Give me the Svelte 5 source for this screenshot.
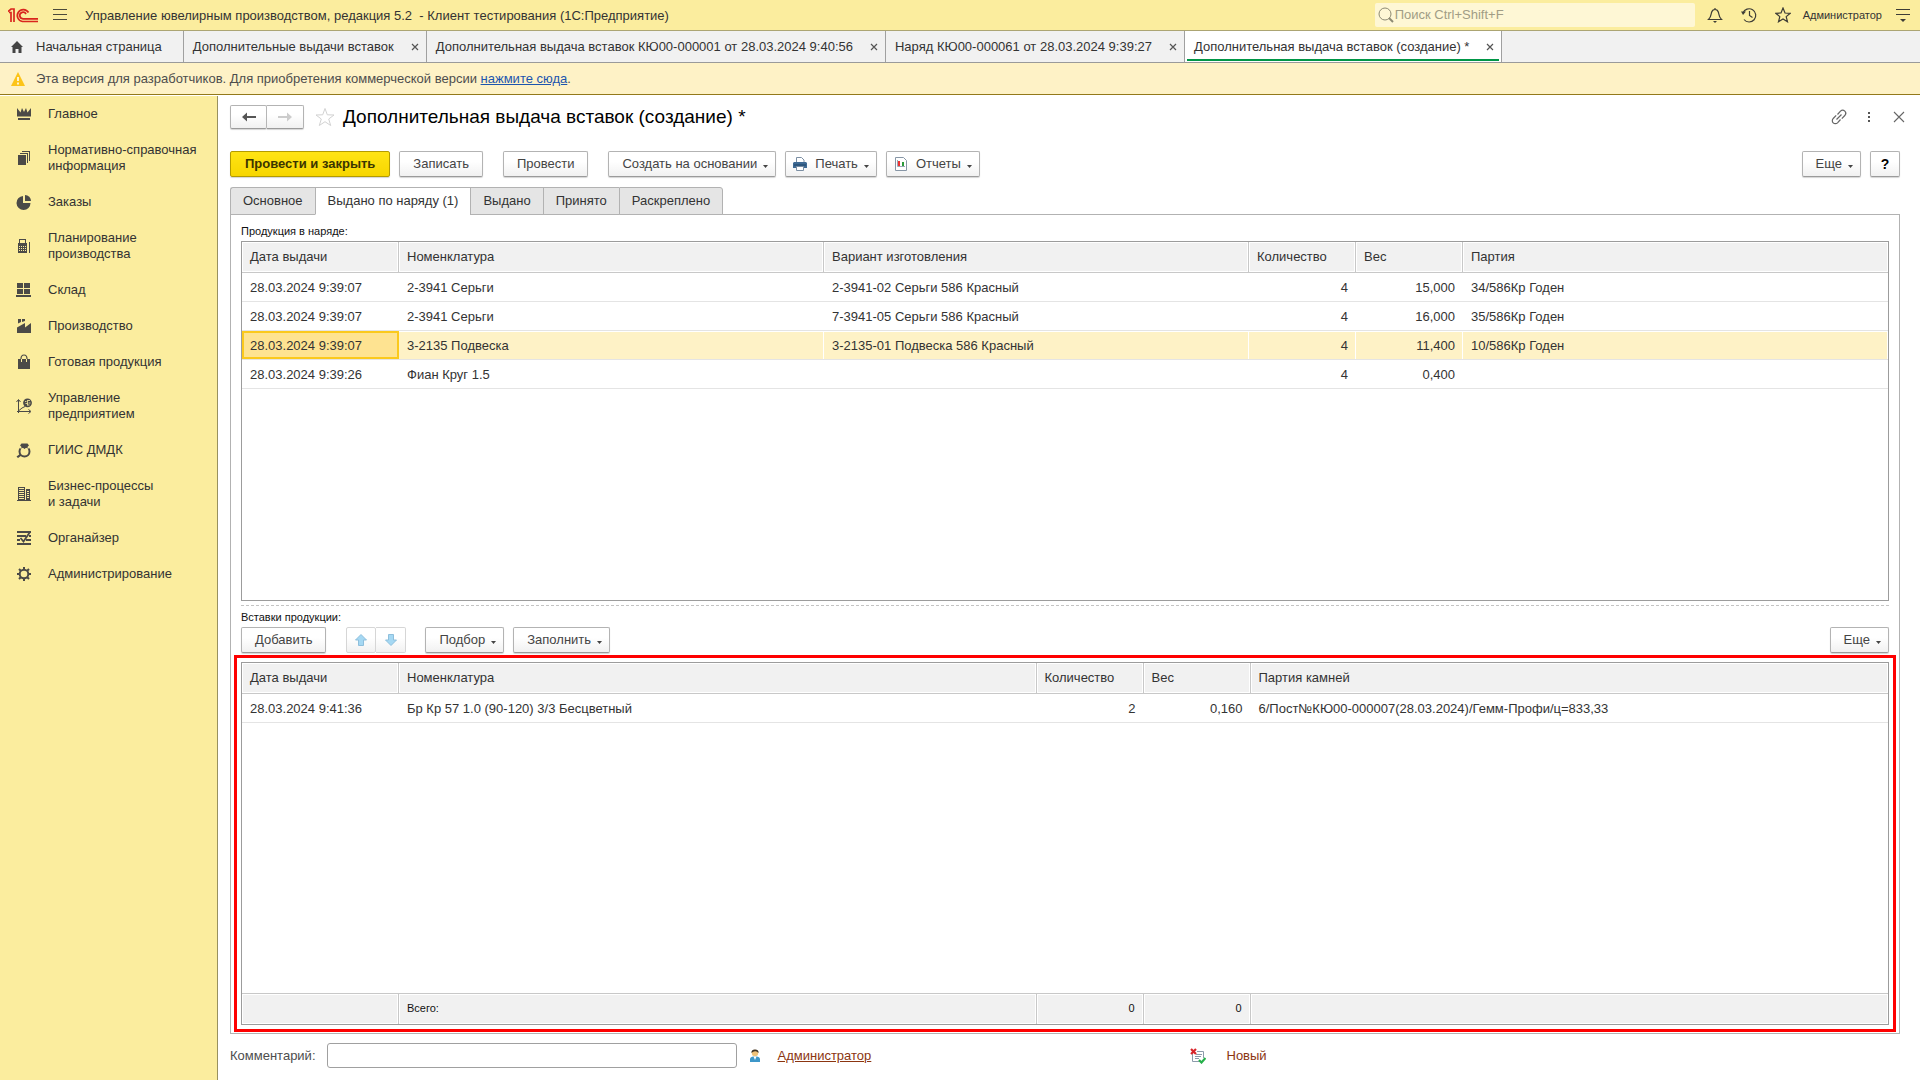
<script>
  const windows = [
    { title: 'Дополнительные выдачи вставок' },
    { title: 'Дополнительная выдача вставок КЮ00-000001 от 28.03.2024 9:40:56' },
    { title: 'Наряд КЮ00-000061 от 28.03.2024 9:39:27' },
    { title: 'Дополнительная выдача вставок (создание) *', active: true }
  ];
  const sections = [
    { icon: 'crown', lines: ['Главное'] },
    { icon: 'docs', lines: ['Нормативно-справочная', 'информация'] },
    { icon: 'pie', lines: ['Заказы'] },
    { icon: 'calc', lines: ['Планирование', 'производства'] },
    { icon: 'store', lines: ['Склад'] },
    { icon: 'factory', lines: ['Производство'] },
    { icon: 'bag', lines: ['Готовая продукция'] },
    { icon: 'chart', lines: ['Управление', 'предприятием'] },
    { icon: 'ring', lines: ['ГИИС ДМДК'] },
    { icon: 'building', lines: ['Бизнес-процессы', 'и задачи'] },
    { icon: 'organizer', lines: ['Органайзер'] },
    { icon: 'gear', lines: ['Администрирование'] }
  ];
  const pages = ['Основное', 'Выдано по наряду (1)', 'Выдано', 'Принято', 'Раскреплено'];
  const activePage = 1;
  const products = [
    ['28.03.2024 9:39:07', '2-3941 Серьги', '2-3941-02 Серьги 586 Красный', '4', '15,000', '34/586Кр Годен'],
    ['28.03.2024 9:39:07', '2-3941 Серьги', '7-3941-05 Серьги 586 Красный', '4', '16,000', '35/586Кр Годен'],
    ['28.03.2024 9:39:07', '3-2135 Подвеска', '3-2135-01 Подвеска 586 Красный', '4', '11,400', '10/586Кр Годен'],
    ['28.03.2024 9:39:26', 'Фиан Круг 1.5', '', '4', '0,400', '']
  ];
  let selected = $state(2);
  let comment = $state('');
</script>

{#snippet icon(name)}
  <svg class="section-icon" viewBox="0 0 16 16" width="16" height="16" fill="#4b4a47" aria-hidden="true">
    {#if name === 'crown'}
      <path d="M1 2l3.500 4.500L6 2 8 6 10 2l1.500 4.500L15 2v8.500H1zM2 12h12v2H2z" />
    {:else if name === 'docs'}
      <path d="M2 5h8v10H2zM4 3h8v10h-1V4H4zM6 1h8v10h-1V2H6z" />
    {:else if name === 'pie'}
      <path d="M7 2v7h7.500A7 7 0 1 1 7 2z" /><path d="M9 1a6 6 0 0 1 6 6H9z" />
    {:else if name === 'calc'}
      <path fill-rule="evenodd" d="M3 1h7v4h1v10H2V5h1zm1 1v3h5V2zM3 8v1h1V8zm2 0v1h1V8zm2 0v1h1V8zm2 0v1h1V8zM3 10v1h1v-1zm2 0v1h1v-1zm2 0v1h1v-1zm2 0v1h1v-1zM3 12v1h1v-1zm2 0v1h1v-1zm2 0v1h1v-1zm2 0v1h1v-1zM13 4h1v11h-1z" />
    {:else if name === 'store'}
      <path d="M1 1h6v5H1zM8 1h6v5H8zM1 7h6v5H1zM8 7h6v5H8zM0 13h15v2H0z" />
    {:else if name === 'factory'}
      <path d="M1 15V9.500L9 5v4.500L15 5v10zM2 1h3v3L2 5.500zM6 1h3v2L6 4z" />
    {:else if name === 'bag'}
      <path d="M2 5h12v10H2z" /><path d="M5.500 5v3M10.500 5v3" stroke="#fbed9e" /><path d="M5 5Q5 1 8 1t3 4" fill="none" stroke="#4b4a47" stroke-width="1.200" />
    {:else if name === 'chart'}
      <path d="M2.500 15V2M.5 4l2-2.500 2 2.500M1 13.500h13M12.500 11.500l2.500 2-2.500 2M3 12.500l3-2.500 3-1.500" fill="none" stroke="#4b4a47" /><circle cx="11.500" cy="4.800" r="4.400" /><path d="M9 3.500h1.500M12 2.500h2M9.500 5.500h2M12.500 5h2M11.500 7h2M11.500 2v5.500" stroke="#fbed9e" stroke-width=".8" />
    {:else if name === 'ring'}
      <circle cx="8.500" cy="9.500" r="5" fill="none" stroke="#4b4a47" stroke-width="2" /><path d="M5.500 1.500h6L13 3.500 8.500 7 4 3.500zM4 12l1.500 1.500L2 16 .5 14.500z" /><path d="M4 5l1.500 1.500M13 5l-1.500 1.500" stroke="#fbed9e" stroke-width="1.200" />
    {:else if name === 'building'}
      <path fill-rule="evenodd" d="M2 1h7v13H2zm1 1v1h5V2zm0 2v1h5V4zm0 2v1h5V6zm0 2v1h5V8zm0 2v1h5v-1zm0 2v1h5v-1zM10 3h4v11h-4zm1 2v1h2V5zm0 2v1h2V7zm0 2v1h2V9zm0 2v1h2v-1zM1 14h14v1H1z" />
    {:else if name === 'organizer'}
      <path d="M1 1h14v2H1zM1 5h9v2H1zM13 5h2v2h-2zM1 9h3v2H1zM10 9h5v2h-5zM1 13h14v2H1z" /><path d="M4.500 8l3 3.500L14 2" fill="none" stroke="#4b4a47" stroke-width="1.800" />
    {:else}
      <circle cx="8" cy="8" r="4.300" fill="none" stroke="#4b4a47" stroke-width="2" />
      <path d="M8 1v3M8 12v3M1 8h3M12 8h3M3 3l2 2M11 11l2 2M3 13l2-2M11 5l2-2" stroke="#4b4a47" stroke-width="2" />
    {/if}
  </svg>
{/snippet}

{#snippet caret()}
  <svg class="caret" viewBox="0 0 5 3" width="5" height="3" aria-hidden="true"><path d="M0 0h5L2.500 3z" fill="#444" /></svg>
{/snippet}

<div class="app">
  <header class="titlebar">
    <svg class="logo" viewBox="0 0 30 16" width="30" height="16" fill="none" stroke="#d9251d" aria-label="1C">
      <path d="M0 4.500L3 2h3v13M3 15V5.500H1" stroke-width="1.700" />
      <path d="M20.500 5.500A6 6 0 1 0 14.500 14.500H30" stroke-width="1.700" />
      <path d="M18 7A3.300 3.300 0 1 0 15 11.800H30" stroke-width="1.700" />
    </svg>
    <button class="plain menu" aria-label="Меню">
      <svg viewBox="0 0 14 12" width="14" height="12" stroke="#4b4a3a"><path d="M0 .5h14M0 5.500h14M0 10.500h14" /></svg>
    </button>
    <span class="app-title">Управление ювелирным производством, редакция 5.2 &nbsp;- Клиент тестирования (1С:Предприятие)</span>
    <label class="search">
      <svg viewBox="0 0 16 16" width="16" height="16" fill="none" stroke="#8d8a73"><circle cx="7" cy="7" r="6" /><path d="M11 11l4 4" stroke-width="2" /></svg>
      <input type="search" placeholder="Поиск Ctrl+Shift+F" aria-label="Поиск" />
    </label>
    <div class="tools">
      <button class="plain" aria-label="Уведомления">
        <svg viewBox="0 0 16 16" width="16" height="16" fill="none" stroke="#3d3c36" stroke-width="1.200"><path d="M1.500 12.500C4 10.500 4 8 4.500 5.500 5 3.500 6.500 2.500 8 2.500s3 1 3.500 3c.5 2.500.5 5 3 7zM8 1v1.500" /><path d="M6 14h4l-2 2z" fill="#3d3c36" stroke="none" /></svg>
      </button>
      <button class="plain" aria-label="История">
        <svg viewBox="0 0 16 16" width="16" height="16" fill="none" stroke="#3d3c36" stroke-width="1.200"><path d="M2 6A6.600 6.600 0 1 1 3 12.500M8.500 4v4.500l3 2" /><path d="M0 4.500h5L2 8z" fill="#3d3c36" stroke="none" /></svg>
      </button>
      <button class="plain" aria-label="Избранное">
        <svg viewBox="0 0 16 16" width="16" height="16" fill="none" stroke="#3d3c36" stroke-width="1.200"><path d="M8 1l2 5 5.200.3-4 3.300 1.300 5.200L8 12l-4.500 2.800 1.300-5.200-4-3.300L6 6z" /></svg>
      </button>
    </div>
    <a class="user" href="#user">Администратор</a>
    <button class="plain" aria-label="Настройки панели">
      <svg viewBox="0 0 14 14" width="14" height="14"><path d="M0 1.500h14M0 6.500h14" stroke="#3d3c36" /><path d="M4 11h6l-3 3z" fill="#3d3c36" /></svg>
    </button>
  </header>

  <nav class="windows" aria-label="Открытые окна">
    <a class="window home" href="#home">
      <svg viewBox="0 0 12 12" width="12" height="12"><path d="M6 0l6 6h-1.500v6H7.500V8h-3v4h-3V6H0z" fill="#444" /></svg>
      Начальная страница
    </a>
    {#each windows as w}
      <div class={['window', w.active && 'active']}>
        <a href="#window">{w.title}</a>
        <button class="plain" aria-label="Закрыть">
          <svg viewBox="0 0 8 8" width="8" height="8"><path d="M1 1l6 6M7 1L1 7" stroke="#555" stroke-width="1.200" /></svg>
        </button>
      </div>
    {/each}
  </nav>

  <div class="notice">
    <svg viewBox="0 0 14 14" width="14" height="14"><path d="M7 0l7 14H0z" fill="#fcc419" /><path d="M7 5v4M7 10.500v2" stroke="#fff" stroke-width="1.600" /></svg>
    <span>Эта версия для разработчиков. Для приобретения коммерческой версии <a href="#buy">нажмите сюда</a>.</span>
  </div>

  <div class="workspace">
    <nav class="sections" aria-label="Разделы">
      {#each sections as s}
        <a href="#section">
          {@render icon(s.icon)}
          <span>{#each s.lines as line, i}{#if i}<br />{/if}{line}{/each}</span>
        </a>
      {/each}
    </nav>

    <main>
      <div class="heading">
        <div class="pair">
          <button class="btn" aria-label="Назад"><svg viewBox="0 0 14 10" width="14" height="10"><path d="M0 5l5-4.500V4h9v2H5v3.500z" fill="#555" /></svg></button>
          <button class="btn" aria-label="Вперед"><svg viewBox="0 0 14 10" width="14" height="10"><path d="M14 5L9 .5V4H0v2h9v3.500z" fill="#ccc" /></svg></button>
        </div>
        <button class="plain star" aria-label="В избранное">
          <svg viewBox="0 0 20 20" width="20" height="20" fill="none" stroke="#d2d2d2"><path d="M10 1.500l2.300 6.300 6.700.2-5.300 4 2 6.500L10 14.700l-5.700 3.800 2-6.500L1 8l6.700-.2z" /></svg>
        </button>
        <h1>Дополнительная выдача вставок (создание) *</h1>
        <div class="form-tools">
          <button class="plain" aria-label="Ссылка">
            <svg viewBox="0 0 16 16" width="16" height="16" fill="none" stroke="#666" stroke-width="1.200"><path d="M6.500 5.500l3-3.300a3 3 0 0 1 4.300 4.300l-3 3.200M9.500 10.500l-3 3.300a3 3 0 0 1-4.300-4.300l3-3.200M5.500 10.500l5-5" /></svg>
          </button>
          <button class="plain" aria-label="Дополнительно">
            <svg viewBox="0 0 16 16" width="16" height="16" fill="#555"><path d="M7 3h2v2H7zM7 7h2v2H7zM7 11h2v2H7z" /></svg>
          </button>
          <button class="plain" aria-label="Закрыть форму">
            <svg viewBox="0 0 16 16" width="16" height="16"><path d="M3 3l10 10M13 3L3 13" stroke="#666" stroke-width="1.100" /></svg>
          </button>
        </div>
      </div>

      <div class="toolbar">
        <button class="btn primary">Провести и закрыть</button>
        <button class="btn">Записать</button>
        <button class="btn apart">Провести</button>
        <button class="btn apart">Создать на основании {@render caret()}</button>
        <button class="btn pictured">
          <svg viewBox="0 0 14 14" width="14" height="14"><path d="M3.500 5V.5h5L11 3v2" fill="#fff" stroke="#7b8ea3" /><path d="M1 5h12l1 1v5H0V6z" fill="#3f6a94" /><path d="M1 8h12" stroke="#1f4468" /><path d="M3.500 9.500h7v4h-7z" fill="#fff" stroke="#7b8ea3" /></svg>
          Печать {@render caret()}
        </button>
        <button class="btn pictured">
          <svg viewBox="0 0 14 14" width="14" height="14"><path d="M1.500.5h8l3 3v10h-11z" fill="#fff" stroke="#8796a6" /><path d="M4 4h2v5H4z" fill="#e33" /><path d="M8 5h2v4H8z" fill="#2b9a3a" /><path d="M3.500 3v6.500H11" fill="none" stroke="#9aa7b5" /></svg>
          Отчеты {@render caret()}
        </button>
        <button class="btn push">Еще {@render caret()}</button>
        <button class="btn help" aria-label="Справка">?</button>
      </div>

      <div class="pages" role="tablist">
        {#each pages as page, i}
          <button role="tab" aria-selected={i === activePage}>{page}</button>
        {/each}
      </div>

      <section class="page" role="tabpanel">
        <h2>Продукция в наряде:</h2>
        <div class="grid products">
          <table>
            <colgroup><col class="date" /><col /><col /><col class="num" /><col class="num" /><col /></colgroup>
            <thead>
              <tr><th>Дата выдачи</th><th>Номенклатура</th><th>Вариант изготовления</th><th>Количество</th><th>Вес</th><th>Партия</th></tr>
            </thead>
            <tbody>
              {#each products as row, r}
                <tr class={{ selected: r === selected }} onclick={() => (selected = r)}>
                  {#each row as cell, c}<td class={{ right: c === 3 || c === 4 }}>{cell}</td>{/each}
                </tr>
              {/each}
              <tr class="filler"><td colspan="6"></td></tr>
            </tbody>
          </table>
        </div>

        <div class="splitter"></div>

        <h2>Вставки продукции:</h2>
        <div class="toolbar inner">
          <button class="btn">Добавить</button>
          <div class="pair arrows">
            <button class="btn" aria-label="Вверх"><svg viewBox="0 0 12 12" width="12" height="12"><path d="M6 .5L11.500 6H8.500v5.500h-5V6H.5z" fill="#a5d8f3" stroke="#8ebfdc" /></svg></button>
            <button class="btn" aria-label="Вниз"><svg viewBox="0 0 12 12" width="12" height="12"><path d="M6 11.500L.5 6h3V.5h5V6h3z" fill="#a5d8f3" stroke="#8ebfdc" /></svg></button>
          </div>
          <button class="btn">Подбор {@render caret()}</button>
          <button class="btn">Заполнить {@render caret()}</button>
          <button class="btn push">Еще {@render caret()}</button>
        </div>

        <div class="frame">
          <div class="grid">
            <table>
              <colgroup><col class="date" /><col /><col class="num" /><col class="num" /><col /></colgroup>
              <thead>
                <tr><th>Дата выдачи</th><th>Номенклатура</th><th>Количество</th><th>Вес</th><th>Партия камней</th></tr>
              </thead>
              <tbody>
                <tr>
                  <td>28.03.2024 9:41:36</td><td>Бр Кр 57 1.0 (90-120) 3/3 Бесцветный</td><td class="right">2</td><td class="right">0,160</td><td>6/Пост№КЮ00-000007(28.03.2024)/Гемм-Профи/ц=833,33</td>
                </tr>
                <tr class="filler"><td colspan="5"></td></tr>
              </tbody>
              <tfoot>
                <tr><td></td><td>Всего:</td><td class="right">0</td><td class="right">0</td><td></td></tr>
              </tfoot>
            </table>
          </div>
        </div>
      </section>

      <footer>
        <label for="comment">Комментарий:</label>
        <input id="comment" type="text" bind:value={comment} />
        <div class="author">
          <svg viewBox="0 0 12 14" width="12" height="14"><circle cx="6" cy="4" r="3.200" fill="#efc27a" /><path d="M2.500 4Q2 .5 6 .5T9.500 4Q8 2 6 2.300T2.500 4z" fill="#3b3024" /><path d="M1 13V9.500Q1.500 8 4 7.500h4Q10.500 8 11 9.500V13z" fill="#3d97c9" /><path d="M4.500 7.500L6 11l1.500-3.500z" fill="#fff" /></svg>
          <a href="#author">Администратор</a>
        </div>
        <div class="status">
          <svg viewBox="0 0 16 16" width="16" height="16"><path d="M2.500 4v9.500h8M7 3.500h6.500V10" fill="none" stroke="#8c9bab" /><path d="M6 6.500h6M5 8.500h6M5 10.500h4" stroke="#8c9bab" /><path d="M1 1l5 5M6 1L1 6" stroke="#d9252b" stroke-width="2.200" /><path d="M9 12l2.500 2.500L15.500 10" fill="none" stroke="#25b04a" stroke-width="2.200" /></svg>
          <span>Новый</span>
        </div>
      </footer>
    </main>
  </div>
</div>

<style>
  :global(body) { background: #fff; }
  .app {
    display: flex;
    flex-direction: column;
    height: 100vh;
    font: 13px/16px "Liberation Sans", Arial, sans-serif;
    color: #333;
  }
  .app :global(*) { box-sizing: border-box; }
  svg { flex: none; display: block; }
  button, input { font: inherit; color: inherit; }
  a { color: inherit; text-decoration: none; }
  .plain {
    display: flex;
    padding: 0;
    border: 0;
    background: none;
  }

  .titlebar {
    display: flex;
    align-items: center;
    height: 31px;
    padding: 0 10px 0 8px;
    background: #fbed9e;
    border-bottom: 1px solid #aca573;
  }
  .menu { margin: 0 18px 0 15px; }
  .app-title { flex: 1; padding-top: 1px; white-space: nowrap; }
  .search {
    display: flex;
    align-items: center;
    gap: 1px;
    width: 320px;
    height: 24px;
    padding-left: 3px;
    margin-bottom: 1px;
    background: #fef7d5;
    border-radius: 2px;
  }
  .search input {
    flex: 1;
    min-width: 0;
    padding: 0;
    border: 0;
    outline: 0;
    background: none;
  }
  .search input::placeholder { color: #a19d85; opacity: 1; }
  .tools { display: flex; gap: 18px; margin: 0 12px; }
  .user { margin-right: 14px; font-size: 11px; }

  .windows {
    display: flex;
    height: 32px;
    background: #f1f1f1;
    border-bottom: 1px solid #9a9a9a;
  }
  .window {
    display: flex;
    align-items: center;
    gap: 17px;
    padding: 0 7px 0 9px;
    border-right: 1px solid #a0a0a0;
    white-space: nowrap;
  }
  .home { gap: 13px; padding: 0 21px 0 11px; }
  .active {
    background: linear-gradient(#009646, #009646) 2px 28px / calc(100% - 4px) 2px no-repeat #fff;
  }

  .notice {
    display: flex;
    align-items: center;
    gap: 11px;
    height: 32px;
    padding-left: 11px;
    background: #fef2c6;
    border-bottom: 1px solid #93791a;
    color: #4d4d4d;
  }
  .notice a { color: #1c55ae; text-decoration: underline; }

  .workspace { display: flex; flex: 1; min-height: 0; padding-top: 1px; }
  .sections {
    width: 218px;
    flex: none;
    background: #fbed9e;
    border-right: 1px solid #98915f;
  }
  .sections a {
    display: flex;
    align-items: center;
    gap: 16px;
    padding: 10px 0 10px 16px;
  }

  main {
    flex: 1;
    min-width: 0;
    display: flex;
    flex-direction: column;
    padding: 9px 20px 12px 12px;
  }
  .btn {
    display: flex;
    align-items: center;
    justify-content: center;
    height: 26px;
    padding: 0 13px;
    background: linear-gradient(#fff 40%, #f1f1f1);
    border: 1px solid #b3b3b3;
    border-bottom-color: #9b9b9b;
    border-radius: 2px;
    box-shadow: 0 1px 1px #d5d5d5;
    color: #444;
    white-space: nowrap;
  }
  .caret { margin: 4px -6px 0 6px; }
  .pair { display: flex; }
  .pair .btn { width: 37px; padding: 0; }
  .pair .btn + .btn { border-left: 0; border-radius: 0 2px 2px 0; }
  .heading { display: flex; align-items: center; height: 24px; }
  .heading .btn { height: 24px; }
  .star { margin: 0 8px 0 11px; }
  h1 { margin: 0; font-size: 19px; line-height: 24px; font-weight: 400; color: #000; }
  .form-tools { display: flex; gap: 14px; margin-left: auto; margin-right: -7px; }

  .toolbar { display: flex; gap: 9px; margin-top: 22px; }
  .primary {
    padding: 0 14px;
    background: linear-gradient(#ffe414, #f7d600);
    border-color: #b39b00;
    font-weight: 700;
    color: #3b3500;
  }
  .apart { margin-left: 11px; }
  .pictured { padding-left: 7px; }
  .pictured > svg:first-child { margin-right: 8px; }
  .push { margin-left: auto; }
  .help { width: 30px; padding: 0; color: #000; font-size: 14px; font-weight: 700; }

  .pages { display: flex; margin: 10px 0 -1px; position: relative; }
  .pages button {
    height: 28px;
    padding: 0 12px;
    background: #e5e5e5;
    border: 1px solid #b2b2b2;
    border-right-width: 0;
    white-space: nowrap;
  }
  .pages button:first-child { border-top-left-radius: 3px; }
  .pages button:last-child { border-right-width: 1px; border-top-right-radius: 3px; }
  .pages button[aria-selected="true"] { background: #fff; border-bottom-color: #fff; }

  .page {
    flex: 1;
    min-height: 0;
    display: flex;
    flex-direction: column;
    padding: 8px 10px 1px;
    border: 1px solid #b2b2b2;
  }
  h2 { margin: 0; font-size: 11px; line-height: 16px; font-weight: 400; color: #111; }
  .grid {
    display: flex;
    flex: 1;
    min-height: 0;
    border: 1px solid #9c9c9c;
  }
  .products { flex: 0 0 44.5%; margin-top: 2px; }
  table {
    flex: 1;
    width: 100%;
    table-layout: fixed;
    border-collapse: separate;
    border-spacing: 0;
  }
  .date { width: 157px; }
  .num { width: 107px; }
  th, td { padding: 0 8px; text-align: left; font-weight: 400; white-space: nowrap; }
  th {
    height: 31px;
    background: #f1f1f1;
    border-right: 1px solid #c8c8c8;
    border-bottom: 1px solid #c8c8c8;
    box-shadow: inset 0 0 0 1px #fff;
  }
  td { height: 29px; padding-top: 2px; border-bottom: 1px solid #e4e4e4; }
  .right { text-align: right; }
  .selected td { background: #fef2c6; box-shadow: inset -1px 1px #fff; }
  .selected td:first-child { background: #fee391; box-shadow: inset 0 0 0 2px #fbc91c; }
  .filler, .filler td { height: 100%; border: 0; }
  tfoot td {
    height: 31px;
    padding-top: 0;
    padding-bottom: 3px;
    background: #f1f1f1;
    border-top: 1px solid #c8c8c8;
    border-right: 1px solid #c8c8c8;
    border-bottom: 0;
    box-shadow: inset 0 0 0 1px #fff;
    font-size: 11px;
    color: #111;
  }
  th:last-child, tfoot td:last-child { border-right: 0; }

  .splitter { margin: 4px 0 3px; border-top: 1px dashed #c4c4c4; }
  .inner { margin-top: 2px; }
  .arrows { margin: 0 10px 0 11px; }
  .arrows .btn { width: 30px; border-color: #d6d6d6; box-shadow: none; }
  .frame {
    display: flex;
    flex: 1;
    min-height: 0;
    margin: 2px -7px 0;
    padding: 4px;
    border: 3px solid #fe0000;
  }

  footer { display: flex; align-items: center; margin-top: 9px; color: #4d4d4d; }
  footer input {
    width: 410px;
    height: 25px;
    margin: 0 12px 0 11px;
    padding: 0 6px;
    border: 1px solid #a0a0a0;
    border-radius: 3px;
  }
  .author, .status { display: flex; align-items: center; gap: 17px; color: #8b3511; }
  .author { width: 441px; }
  .status { gap: 21px; }
  .author a { text-decoration: underline; }
</style>
